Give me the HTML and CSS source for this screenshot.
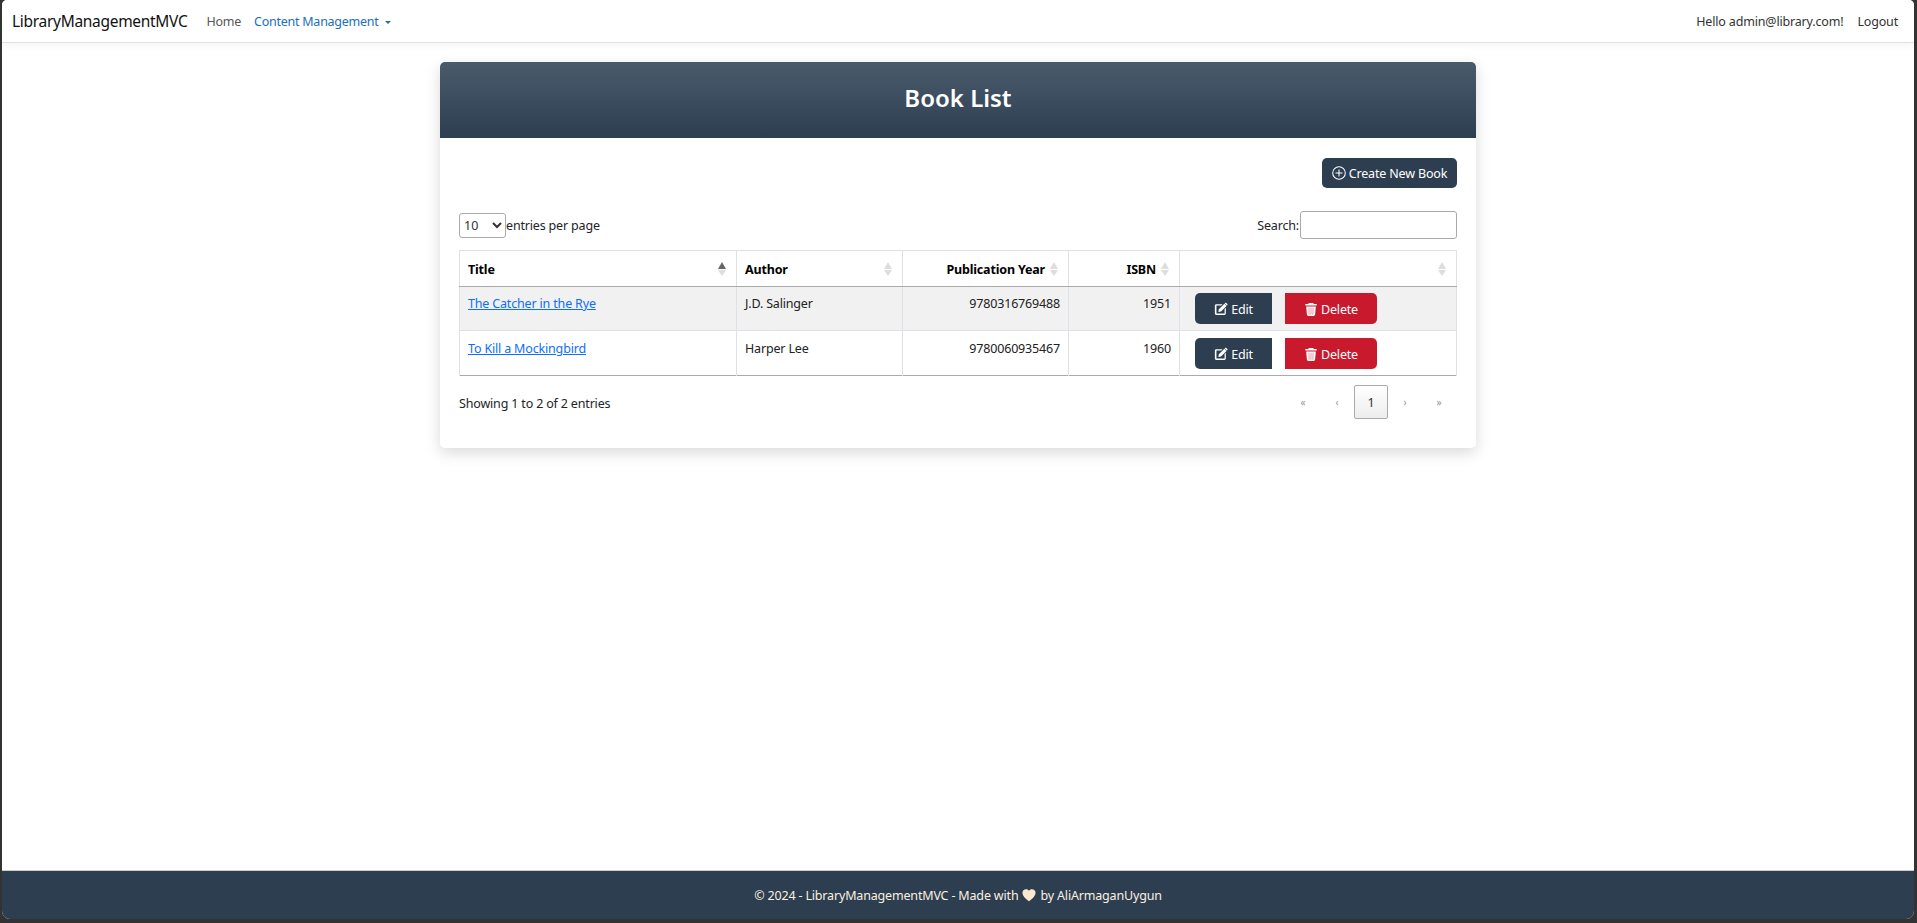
FILE: index.html
```html
<!DOCTYPE html>
<html lang="en">
<head>
<meta charset="UTF-8" />
<title>Book List - LibraryManagementMVC</title>
<link rel="stylesheet" href="styles.css">
</head>
<body>

<div class="frame">
  <!-- top navigation -->
  <nav class="navbar">
    <a class="brand" href="#">LibraryManagementMVC</a>
    <a class="nav-link" href="#">Home</a>
    <a class="nav-link nav-active" href="#">Content Management<span class="caret"></span></a>
    <div class="nav-right">
      <a class="nav-user" href="#">Hello admin@library.com!</a>
      <a class="nav-user" href="#">Logout</a>
    </div>
  </nav>

  <main class="content">
    <div class="card">
      <div class="card-header"><h1>Book List</h1></div>
      <div class="card-body">
        <div class="actions">
          <a class="btn btn-create" href="#">
            <svg class="icon" viewBox="0 0 16 16"><circle cx="8" cy="8" r="7.2" fill="none" stroke="currentColor" stroke-width="1.2"/><path d="M8 4v8M4 8h8" stroke="currentColor" stroke-width="1.2"/></svg>
            Create New Book
          </a>
        </div>

        <div class="dt-top">
          <label class="dt-length"><select class="dt-select"><option>10</option><option>25</option><option>50</option></select>entries per page</label>
          <label class="dt-search">Search:<input class="dt-input" type="search"></label>
        </div>

        <table class="dt-table">
          <colgroup>
            <col class="col-title"><col class="col-author"><col class="col-year"><col class="col-isbn"><col>
          </colgroup>
          <thead>
            <tr>
              <th class="sort-asc">Title</th>
              <th>Author</th>
              <th class="num">Publication Year</th>
              <th class="num">ISBN</th>
              <th></th>
            </tr>
          </thead>
          <tbody>
            <tr class="odd">
              <td><a class="book-link" href="#">The Catcher in the Rye</a></td>
              <td>J.D. Salinger</td>
              <td class="num">9780316769488</td>
              <td class="num">1951</td>
              <td class="cell-btns">
                <div class="row-btns">
                  <a class="btn btn-edit" href="#"><svg class="icon" viewBox="0 0 16 16"><use href="#i-edit"/></svg>Edit</a>
                  <a class="btn btn-delete" href="#"><svg class="icon" viewBox="0 0 16 16"><use href="#i-trash"/></svg>Delete</a>
                </div>
              </td>
            </tr>
            <tr class="even">
              <td><a class="book-link" href="#">To Kill a Mockingbird</a></td>
              <td>Harper Lee</td>
              <td class="num">9780060935467</td>
              <td class="num">1960</td>
              <td class="cell-btns">
                <div class="row-btns">
                  <a class="btn btn-edit" href="#"><svg class="icon" viewBox="0 0 16 16"><use href="#i-edit"/></svg>Edit</a>
                  <a class="btn btn-delete" href="#"><svg class="icon" viewBox="0 0 16 16"><use href="#i-trash"/></svg>Delete</a>
                </div>
              </td>
            </tr>
          </tbody>
        </table>

        <div class="dt-bottom">
          <div class="dt-info">Showing 1 to 2 of 2 entries</div>
          <div class="pager">
            <a class="page" href="#">«</a>
            <a class="page" href="#">‹</a>
            <a class="page page-current" href="#">1</a>
            <a class="page" href="#">›</a>
            <a class="page" href="#">»</a>
          </div>
        </div>
      </div>
    </div>
  </main>

  <footer class="footer">
    © 2024 - LibraryManagementMVC - Made with
    <svg class="heart" viewBox="0 0 16 16"><path d="M8 15C-6 6 3-2 8 3c5-5 14 3 0 12z" fill="#fbe8d0"/></svg>
    by AliArmaganUygun
  </footer>
</div>

<!-- shared icons -->
<svg class="sprite" width="0" height="0">
  <symbol id="i-edit" viewBox="0 0 16 16">
    <path d="M2.500 2.500h7.200l-1.400 1.400H3.200a.4.4 0 0 0-.4.4v8.500c0 .2.2.4.4.4h8.500c.2 0 .4-.2.4-.4V8l1.400-1.400v6.600c0 .9-.7 1.600-1.600 1.600H2.600c-.9 0-1.600-.7-1.600-1.600V4.100c0-.9.7-1.600 1.500-1.600z" fill="currentColor"/>
    <path d="M5.500 8.300 11.800 2l2.500 2.500-6.300 6.300-3 .5zM12.700 1.100c.4-.4 1-.4 1.400 0l1.100 1.100c.4.4.4 1 0 1.400l-.5.5-2.500-2.500z" fill="currentColor"/>
  </symbol>
  <symbol id="i-trash" viewBox="0 0 16 16">
    <path d="M5.500 1h5l.6 1.300h3.400V4h-13V2.300h3.400zM2.500 5h11l-.8 9.300c-.1.900-.8 1.700-1.700 1.700H5c-.9 0-1.600-.8-1.700-1.700z" fill="currentColor"/>
    <path d="M5.600 6.500l.3 8M8 6.500v8M10.400 6.500l-.3 8" stroke="#e58a96" stroke-width="1" fill="none"/>
  </symbol>
</svg>

</body>
</html>
```

FILE: styles.css
```css
/* base */
* {
  box-sizing: border-box;
}

html, body {
  height: 100%;
  margin: 0;
}

body {
  font-family: "Noto Sans", "Open Sans", Arial, sans-serif;
  font-size: 12.5px;
  letter-spacing: -0.17px;
  color: #212529;
  background: #333;
}

a {
  text-decoration: none;
}

/* browser window edge shows dark around the page */
.frame {
  display: flex;
  flex-direction: column;
  height: 919px;
  margin: 0 3px 0 2px;
  overflow: hidden;
  background: #fff;
  border-radius: 5px 5px 8px 8px;
}

/* navbar */
.navbar {
  display: flex;
  align-items: center;
  height: 43px;
  padding: 0 16px 0 10px;
  background: #fff;
  border-bottom: 1px solid #dee2e6;
  box-shadow: 0 2px 8px rgba(0, 0, 0, 0.05);
}

.brand {
  font-size: 15.5px;
  letter-spacing: -0.3px;
  color: #111;
  margin-right: 19px;
}

.nav-link {
  color: #555;
  letter-spacing: -0.25px;
  margin-right: 13px;
}

.nav-active {
  color: #1b6ec2;
}

.caret {
  display: inline-block;
  margin-left: 6px;
  vertical-align: 2px;
  border-top: 3px solid currentColor;
  border-left: 3px solid transparent;
  border-right: 3px solid transparent;
}

.nav-right {
  display: flex;
  gap: 14px;
  margin-left: auto;
}

.nav-user {
  color: #333;
}

/* card */
.content {
  flex: 1;
  padding-top: 19px;
}

.card {
  width: 1036px;
  margin: 0 auto;
  background: #fff;
  border-radius: 5px;
  box-shadow: 0 5px 15px rgba(0, 0, 0, 0.15);
}

.card-header {
  height: 76px;
  padding-bottom: 6px;
  display: flex;
  align-items: center;
  justify-content: center;
  border-radius: 5px 5px 0 0;
  background: linear-gradient(180deg, #4a5b6c, #2c3e50);
}

.card-header h1 {
  margin: 0;
  font-size: 24px;
  font-weight: 600;
  letter-spacing: 0;
  color: #fff;
}

.card-body {
  padding: 20px 19px 29px;
}

.actions {
  display: flex;
  justify-content: flex-end;
  margin-bottom: 23px;
}

/* buttons */
.btn {
  display: inline-flex;
  align-items: center;
  justify-content: center;
  gap: 3px;
  height: 31px;
  padding-top: 1px;
  color: #fff;
  font-size: 12.5px;
  border-radius: 5px;
}

.icon {
  width: 14px;
  height: 14px;
}

.btn-create {
  width: 135px;
  height: 30px;
  padding-top: 0;
  background: #2c3e50;
}

.btn-edit {
  width: 77px;
  background: #2c3e50;
  border-radius: 5px 0 0 5px;
}

.btn-delete {
  width: 92px;
  background: #c9192c;
  border-radius: 0 5px 5px 0;
}

.row-btns {
  display: flex;
  gap: 13px;
}

/* datatable controls */
.dt-top {
  display: flex;
  justify-content: space-between;
  align-items: center;
  height: 28px;
  margin-bottom: 11px;
}

.dt-length, .dt-search {
  display: flex;
  align-items: center;
}

.dt-select {
  width: 47px;
  height: 25px;
  font: inherit;
  color: #333;
  background: #fff;
  border: 1px solid #aaa;
  border-radius: 3px;
}

.dt-input {
  width: 157px;
  height: 28px;
  margin-left: 1px;
  border: 1px solid #aaa;
  border-radius: 3px;
  background: #fff;
}

/* table */
.dt-table {
  width: 998px;
  table-layout: fixed;
  border-collapse: collapse;
  border-top: 1px solid #dee2e6;
  border-bottom: 1px solid #aaa;
}

.col-title { width: 277px; }
.col-author { width: 166px; }
.col-year { width: 166px; }
.col-isbn { width: 111px; }

.dt-table th, .dt-table td {
  padding: 8px;
  vertical-align: top;
  border-left: 1px solid #dee2e6;
  border-right: 1px solid #dee2e6;
  text-align: left;
}

.dt-table th {
  position: relative;
  height: 36px;
  padding-top: 9px;
  font-weight: 700;
  color: #000;
  vertical-align: middle;
  border-bottom: 1px solid #aaa;
}

.dt-table td {
  height: 44px;
  color: #222;
  border-bottom: 1px solid #dee2e6;
}

.dt-table .even td {
  height: 45px;
  padding-top: 9px;
  border-bottom: 0;
}

.dt-table th.num, .dt-table td.num {
  text-align: right;
}

.dt-table th.num {
  padding-right: 23px;
}

.book-link {
  color: #0d6efd;
  text-decoration: underline;
}

.odd td {
  background: #f1f1f1;
}

.dt-table td.cell-btns {
  padding: 6px 15px;
}

.dt-table .even td.cell-btns {
  padding-top: 7px;
}

/* sort arrows */
.dt-table th::before, .dt-table th::after {
  content: "";
  position: absolute;
  right: 10px;
  border-left: 4px solid transparent;
  border-right: 4px solid transparent;
}

.dt-table th::before {
  top: 11px;
  border-bottom: 7px solid #ddd;
}

.dt-table th::after {
  top: 18.5px;
  border-top: 6px solid #ddd;
}

.dt-table th.sort-asc::before {
  border-bottom-color: #666;
}

/* bottom row */
.dt-bottom {
  display: flex;
  justify-content: space-between;
  align-items: center;
  margin-top: 9px;
}

.dt-info {
  padding-top: 2px;
}

.pager {
  display: flex;
  align-items: center;
  margin-right: 1px;
}

.page {
  display: flex;
  align-items: center;
  justify-content: center;
  width: 34px;
  height: 34px;
  color: #999;
  font-size: 10px;
}

.page-current {
  color: #333;
  font-size: 12.5px;
  border: 1px solid #aaa;
  border-radius: 2px;
  background: linear-gradient(180deg, #fff, #ededed);
}

/* footer */
.footer {
  display: flex;
  align-items: center;
  justify-content: center;
  gap: 4px;
  height: 49px;
  color: #fbf0e0;
  background: #2c3e50;
  border-top: 1px solid #ccc;
}

.heart {
  width: 14px;
  height: 14px;
}

.sprite {
  position: absolute;
}
```
